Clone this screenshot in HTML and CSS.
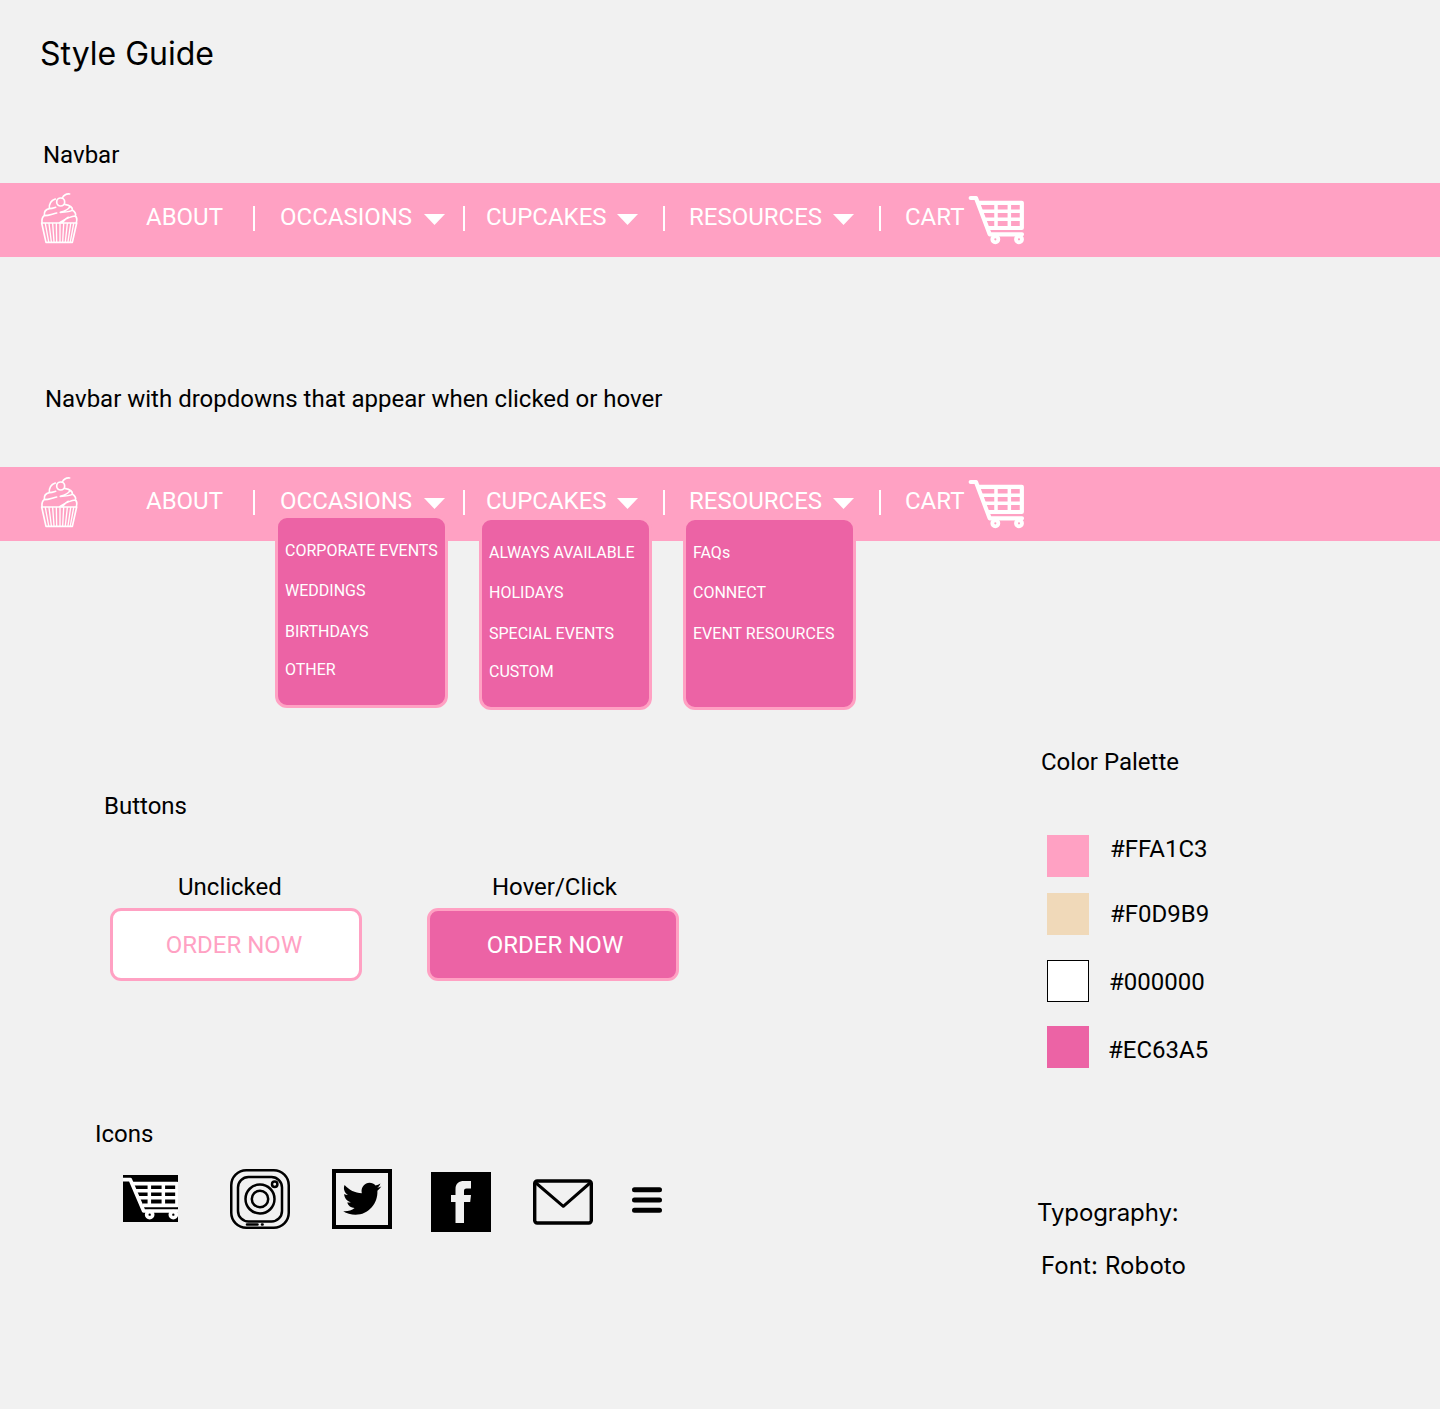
FILE: index.html
```html
<!DOCTYPE html>
<html lang="en">
<head>
<meta charset="utf-8">
<title>Style Guide</title>
<link rel="stylesheet" href="styles.css">
</head>
<body>
<svg class="defs" aria-hidden="true">
  <symbol id="cupcake" viewBox="60 36 117 156">
    <g fill="none" stroke="#fff" stroke-width="5" stroke-linecap="round" stroke-linejoin="round">
      <path d="M65 129H170L157 187H78Z"/>
      <path d="M76 131L86 185M87 131L94 185M98 131L102 185M109 131L110 185M120 131V185M131 131L128 185M142 131L136 185M152 131L144 185M161 131L151 185" stroke-width="4"/>
      <circle cx="122" cy="66" r="12"/>
      <path d="M127 54C131 46 139 41 149 42M106 57C92 62 87 74 88 86C77 88 72 96 73 106C67 111 65 118 66 127M88 86C96 86 101 84 107 82M134 73C150 76 158 82 157 90C154 96 139 96 121 97M73 107C87 107 96 102 110 99M157 90C167 97 169 101 166 108C173 114 171 121 169 128M166 108C148 109 132 120 119 128M149 81C146 88 134 93 121 97M145 112C137 116 131 123 126 128"/>
    </g>
  </symbol>
  <symbol id="cart" viewBox="444 45 174 150">
    <g fill="none" stroke="#fff" stroke-linecap="round" stroke-linejoin="round">
      <path d="M452 54H468L509 163H606" stroke-width="12.500"/>
      <path d="M477 68.500H605.500V144H506" stroke-width="12.500"/>
      <path d="M486 94H605M493 118H605M528 68V145M568 68V145" stroke-width="10.500"/>
      <circle cx="526" cy="178" r="9" stroke-width="11.500"/>
      <circle cx="597" cy="178" r="9" stroke-width="11.500"/>
    </g>
  </symbol>
  <symbol id="caret" viewBox="0 0 21 11"><path d="M0 0H21L10.500 11Z" fill="#fff"/></symbol>
</svg>

<h1 class="title">Style Guide</h1>

<h2 class="label label-navbar">Navbar</h2>
<nav class="navbar">
  <svg class="logo"><use href="#cupcake"/></svg>
  <div class="about">ABOUT</div>
  <div class="item occasions"><span>OCCASIONS</span><svg class="caret"><use href="#caret"/></svg></div>
  <div class="item cupcakes"><span>CUPCAKES</span><svg class="caret"><use href="#caret"/></svg></div>
  <div class="item resources"><span>RESOURCES</span><svg class="caret"><use href="#caret"/></svg></div>
  <div class="item cart"><span>CART</span><svg class="cart-icon"><use href="#cart"/></svg></div>
</nav>

<h2 class="label label-dropdowns">Navbar with dropdowns that appear when clicked or hover</h2>
<nav class="navbar">
  <svg class="logo"><use href="#cupcake"/></svg>
  <div class="about">ABOUT</div>
  <div class="item occasions"><span>OCCASIONS</span><svg class="caret"><use href="#caret"/></svg>
    <ul class="menu"><li>CORPORATE EVENTS</li><li>WEDDINGS</li><li>BIRTHDAYS</li><li>OTHER</li></ul>
  </div>
  <div class="item cupcakes"><span>CUPCAKES</span><svg class="caret"><use href="#caret"/></svg>
    <ul class="menu"><li>ALWAYS AVAILABLE</li><li>HOLIDAYS</li><li>SPECIAL EVENTS</li><li>CUSTOM</li></ul>
  </div>
  <div class="item resources"><span>RESOURCES</span><svg class="caret"><use href="#caret"/></svg>
    <ul class="menu"><li>FAQs</li><li>CONNECT</li><li>EVENT RESOURCES</li></ul>
  </div>
  <div class="item cart"><span>CART</span><svg class="cart-icon"><use href="#cart"/></svg></div>
</nav>

<main class="columns">
  <div class="components">
    <h2 class="label label-buttons">Buttons</h2>
    <div class="buttons">
      <div class="button-demo"><span class="caption">Unclicked</span><button class="btn">ORDER NOW</button></div>
      <div class="button-demo"><span class="caption">Hover/Click</span><button class="btn btn-active">ORDER NOW</button></div>
    </div>
    <h2 class="label label-icons">Icons</h2>
    <div class="icons">
      <svg class="icon-cart" width="55" height="47" viewBox="39 45 165 141">
        <path d="M39 45H204V186H39Z" fill="#000"/>
        <g fill="none" stroke="#fff" stroke-linejoin="round">
          <path d="M39 59H61L101 153H204" stroke-width="11"/>
          <path d="M68 71H201V136H98" stroke-width="11"/>
          <path d="M78 92H202M87 113H202M118 71V136M160 71V136" stroke-width="10.500"/>
          <circle cx="119" cy="164" r="9" stroke-width="11"/>
          <circle cx="190" cy="164" r="9" stroke-width="11"/>
        </g>
      </svg>
      <svg class="icon-instagram" width="60" height="60" viewBox="0 0 60 60" fill="none" stroke="#000" stroke-width="2.500">
        <rect x="1.250" y="1.250" width="57.500" height="57.500" rx="15"/>
        <rect x="8" y="8" width="44" height="44.500" rx="10.500"/>
        <circle cx="30" cy="30" r="14.500"/>
        <circle cx="30" cy="30" r="8.200"/>
        <circle cx="44.700" cy="15.300" r="2.700"/>
        <path d="M17 55.500H27.500M32 55.500H32.600" stroke-linecap="round" stroke-width="2.600"/>
      </svg>
      <svg class="icon-twitter" width="60" height="60" viewBox="0 0 60 60">
        <rect x="2" y="2" width="56" height="56" fill="none" stroke="#000" stroke-width="4"/>
        <path d="M12.600 16C17 21 23 24 29.800 24.200C28.500 18 33 13.800 37.500 13.800C40 13.800 42 14.800 43.500 16.400C45.300 16 47 15.400 48.400 14.500C47.800 16.400 46.700 17.700 45.200 18.700C46.800 18.500 48 18.100 49.300 17.600C48.200 19.300 46.900 20.600 45.400 21.700C46 34.500 36.500 45.700 23.500 45.700C19 45.700 14.500 44.400 11.200 42.200C15.500 42.600 19.500 41.400 22.600 39C19 38.800 16.200 36.600 15.200 33.400C16.500 33.600 17.600 33.600 18.800 33.200C15 32.300 12.200 29 12.200 25C13.300 25.700 14.600 26.100 15.900 26.100C12.300 23.500 11 19.400 12.600 16Z" fill="#000"/>
      </svg>
      <svg class="icon-facebook" width="60" height="60" viewBox="0 0 60 60">
        <path d="M0 0H60V60H0Z" fill="#000"/>
        <path d="M24.500 51V30H20V23H24.500V17C24.500 11.500 28 9 33 9H40V16.500H35.500C33.500 16.500 33 17.500 33 19V23H40L39.200 30H33V51Z" fill="#f1f1f1"/>
      </svg>
      <svg class="icon-mail" width="60" height="46" viewBox="0 0 60 46" fill="none" stroke="#000" stroke-linejoin="round">
        <rect x="1.700" y="2" width="56.600" height="42" rx="2.500" stroke-width="3.400"/>
        <path d="M3 4L30.300 27.300L57 4" stroke-width="3"/>
      </svg>
      <svg class="icon-menu" width="30" height="26" viewBox="0 0 30 26" stroke="#000" stroke-width="5" stroke-linecap="round">
        <path d="M2.500 2.700H27.500M2.500 13H27.500M2.500 23.300H27.500"/>
      </svg>
    </div>
  </div>

  <aside class="tokens">
    <h2 class="label label-palette">Color Palette</h2>
    <div class="palette">
      <div class="color pink"><i class="swatch"></i><span>#FFA1C3</span></div>
      <div class="color sand"><i class="swatch"></i><span>#F0D9B9</span></div>
      <div class="color white"><i class="swatch"></i><span>#000000</span></div>
      <div class="color magenta"><i class="swatch"></i><span>#EC63A5</span></div>
    </div>
    <p class="type-label">Typography:</p>
    <p class="type-font">Font: Roboto</p>
  </aside>
</main>
</body>
</html>
```
FILE: styles.css
```css
* { box-sizing: border-box; margin: 0; padding: 0; }
body {
  min-height: 1409px;
  background: #f1f1f1;
  color: #000;
  font: 400 24px/28px Roboto, sans-serif;
  white-space: nowrap;
}
svg { display: block; flex: none; }
.defs { position: absolute; width: 0; height: 0; }
.title { padding: 34px 0 0 40px; font: 400 32px/39px Inter, sans-serif; }
.label { font-size: 24px; font-weight: 400; }
.label-navbar { padding: 68px 0 14px 43px; }
.label-dropdowns { padding: 128px 0 54px 45px; }

.navbar {
  display: grid;
  grid-template-columns: 106px 107px 210px 200px 216px 160px;
  height: 74px;
  padding-left: 40px;
  background: #ffa1c3;
  color: #fff;
}
.logo { width: 39px; height: 52px; margin-top: 9px; }
.about { padding-top: 20px; }
.item { position: relative; display: flex; padding-top: 20px; }
.item::before { content: ""; width: 2px; height: 25px; margin-top: 3px; background: #fff; }
.occasions span { margin-left: 25px; }
.cupcakes span { margin-left: 21px; }
.resources span { margin-left: 24px; }
.cart span { width: 64px; margin-left: 24px; }
.caret { width: 21px; height: 11px; margin: 11px 25px 0 auto; }
.occasions .caret { margin-right: 18px; }
.cart-icon { width: 58px; height: 50px; margin: -8px 0 0 -1px; }
.menu {
  position: absolute;
  top: 50px;
  left: 16px;
  width: 173px;
  height: 193px;
  padding: 21px 7px 0;
  border: 3px solid #ffa1c3;
  border-radius: 12px;
  background: #ec63a5;
  font-size: 16px;
  line-height: 19px;
  list-style: none;
}
.occasions .menu { top: 48px; left: 22px; }
.resources .menu { left: 20px; }
.menu li { margin-top: 21px; }
.menu li:first-child { margin-top: 2px; }
.menu li:nth-child(3) { margin-top: 22px; }
.menu li:nth-child(4) { margin-top: 19px; }

.columns { display: grid; grid-template-columns: 1037px 1fr; }
.label-buttons { padding: 251px 0 0 104px; }
.buttons { display: flex; gap: 65px; padding: 53px 0 0 110px; }
.button-demo { display: flex; flex-direction: column; width: 252px; }
.caption { padding-left: 68px; }
.button-demo:nth-child(2) .caption { padding-left: 65px; }
.btn {
  height: 73px;
  margin-top: 7px;
  padding-right: 4px;
  border: 3px solid #ffa1c3;
  border-radius: 11px;
  background: #fff;
  color: #ffa1c3;
  font: inherit;
}
.btn.btn-active { padding: 0 0 0 4px; background: #ec63a5; color: #fff; }
.label-icons { padding: 139px 0 0 95px; }
.icons { display: flex; align-items: flex-start; padding: 21px 0 0 123px; }
.icon-cart { margin-top: 6px; }
.icon-instagram { margin-left: 52px; }
.icon-twitter { margin-left: 42px; }
.icon-facebook { margin: 3px 0 0 39px; }
.icon-mail { margin: 10px 0 0 42px; }
.icon-menu { margin: 18px 0 0 39px; }

.label-palette { padding: 207px 0 0 4px; }
.palette { padding: 59px 0 0 10px; }
.color { display: flex; height: 42px; gap: 21px; }
.swatch { width: 42px; height: 42px; }
.pink .swatch { background: #ffa1c3; }
.sand { margin-top: 16px; }
.sand .swatch { background: #f0d9b9; }
.sand span { padding-top: 7px; }
.white { margin-top: 25px; gap: 20px; }
.white .swatch { border: 1px solid #000; background: #fff; }
.white span { padding-top: 8px; }
.magenta { margin-top: 24px; gap: 19px; }
.magenta .swatch { background: #ec63a5; }
.magenta span { padding-top: 10px; }
.type-label, .type-font { font: 400 24px/29px Inter, sans-serif; }
.type-label { padding-top: 130px; letter-spacing: -0.1px; }
.type-font { padding: 24px 0 0 4px; letter-spacing: 0.1px; }
```
